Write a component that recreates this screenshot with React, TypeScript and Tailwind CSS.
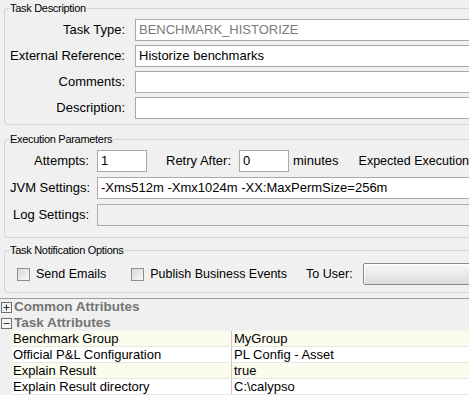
import React from "react";

const font = "font-['Liberation_Sans',Arial,sans-serif]";

function Field({
  children,
  className = "",
}: {
  children?: React.ReactNode;
  className?: string;
}) {
  return (
    <div
      className={`h-[22px] border border-[#a9a9a9] bg-white pl-[3px] flex items-center text-[13px] whitespace-nowrap overflow-hidden ${className}`}
    >
      {children}
    </div>
  );
}

function Group({
  title,
  className = "",
  children,
}: {
  title: string;
  className?: string;
  children: React.ReactNode;
}) {
  return (
    <fieldset
      className={`ml-[4px] w-[520px] border border-[#d3d3d3] rounded-[3px] px-[5px] ${className}`}
    >
      <legend className="-ml-[1px] px-[1px] text-[11px] leading-[13px] tracking-[-0.3px] text-black">
        {title}
      </legend>
      {children}
    </fieldset>
  );
}

function Check({ label }: { label: string }) {
  return (
    <div className="flex items-center gap-[6px] whitespace-nowrap">
      <div className="w-[13px] h-[13px] border border-[#8f8f8f] bg-gradient-to-br from-[#d6d6d6] to-[#fbfbfb]" />
      <span className="text-[12.5px]">{label}</span>
    </div>
  );
}

function Toggle({ open }: { open: boolean }) {
  return (
    <svg width="11" height="11" viewBox="0 0 11 11" className="shrink-0">
      <rect x="0.5" y="0.5" width="10" height="10" fill="#f4f4f4" stroke="#6f6f6f" />
      <line x1="2.5" y1="5.5" x2="8.5" y2="5.5" stroke="#303030" />
      {!open && <line x1="5.5" y1="2.5" x2="5.5" y2="8.5" stroke="#303030" />}
    </svg>
  );
}

const rows: [string, string][] = [
  ["Benchmark Group", "MyGroup"],
  ["Official P&L Configuration", "PL Config - Asset"],
  ["Explain Result", "true"],
  ["Explain Result directory", "C:\\calypso"],
];

export default function App() {
  return (
    <div
      className={`w-[469px] h-[395px] overflow-hidden bg-[#f0f0f0] text-black ${font}`}
    >
      <div className="pt-[2px]">
        <Group title="Task Description" className="pt-[4px] pb-[5px]">
          <div className="flex flex-col gap-[4px]">
            {[
              ["Task Type:", "BENCHMARK_HISTORIZE"],
              ["External Reference:", "Historize benchmarks"],
              ["Comments:", ""],
              ["Description:", ""],
            ].map(([l, v], i) => (
              <div key={l} className="flex items-center">
                <div className="w-[115px] text-right text-[13px] whitespace-nowrap">
                  {l}
                </div>
                <Field
                  className={`ml-[10px] flex-1 ${i === 0 ? "text-[#7a7a7a]" : ""}`}
                >
                  {v}
                </Field>
              </div>
            ))}
          </div>
        </Group>

        <Group title="Execution Parameters" className="mt-[8px] pt-[4px] pb-[11px]">
          <div className="flex flex-col gap-[5px]">
            <div className="flex items-center whitespace-nowrap text-[13px]">
              <div className="w-[79px] text-right">Attempts:</div>
              <Field className="ml-[8px] w-[50px]">1</Field>
              <div className="ml-[19px]">Retry After:</div>
              <Field className="ml-[8px] w-[50px]">0</Field>
              <div className="ml-[4px]">minutes</div>
              <div className="ml-[20px] text-[12.5px]">Expected Execution</div>
            </div>
            <div className="flex items-center">
              <div className="w-[79px] text-right text-[13px] whitespace-nowrap">
                JVM Settings:
              </div>
              <Field className="ml-[8px] flex-1">
                -Xms512m -Xmx1024m -XX:MaxPermSize=256m
              </Field>
            </div>
            <div className="flex items-center">
              <div className="w-[79px] text-right text-[13px] whitespace-nowrap">
                Log Settings:
              </div>
              <Field className="ml-[8px] flex-1 !bg-[#f0f0f0]" />
            </div>
          </div>
        </Group>

        <Group title="Task Notification Options" className="mt-[6px] pt-[6px] pb-[7px]">
          <div className="flex items-center h-[22px] whitespace-nowrap">
            <div className="ml-[7px]">
              <Check label="Send Emails" />
            </div>
            <div className="ml-[25px]">
              <Check label="Publish Business Events" />
            </div>
            <div className="ml-[19px] text-[12.5px]">To User:</div>
            <div className="ml-[10px] w-[150px] h-[22px] border border-[#8a8a8a] rounded-[2px] bg-gradient-to-b from-[#f8f8f8] to-[#dcdcdc] shadow-[inset_1px_1px_0_#ffffff]" />
          </div>
        </Group>

        <div className="mt-[5px] h-px bg-[#a0a0a0]" />

        <div className="flex flex-col">
          <div className="h-[16px] flex items-center gap-[2px] pl-[1px]">
            <Toggle open={false} />
            <span className="text-[13.5px] font-bold text-[#747474] leading-[16px] whitespace-nowrap">
              Common Attributes
            </span>
          </div>
          <div className="h-[16px] flex items-center gap-[2px] pl-[1px]">
            <Toggle open={true} />
            <span className="text-[13.5px] font-bold text-[#747474] leading-[16px] whitespace-nowrap">
              Task Attributes
            </span>
          </div>
          <div className="ml-[12px] flex flex-col">
            {rows.map(([k, v], i) => (
              <div
                key={k}
                className={`h-[16px] flex border-b border-[#e6e6e6] text-[13px] leading-[15px] whitespace-nowrap ${
                  i % 2 === 0 ? "bg-[#fbfbee]" : "bg-white"
                }`}
              >
                <div className="w-[220px] pl-[1px] border-r border-[#c8c8c8]">{k}</div>
                <div className="pl-[2px]">{v}</div>
              </div>
            ))}
          </div>
        </div>
      </div>
    </div>
  );
}
